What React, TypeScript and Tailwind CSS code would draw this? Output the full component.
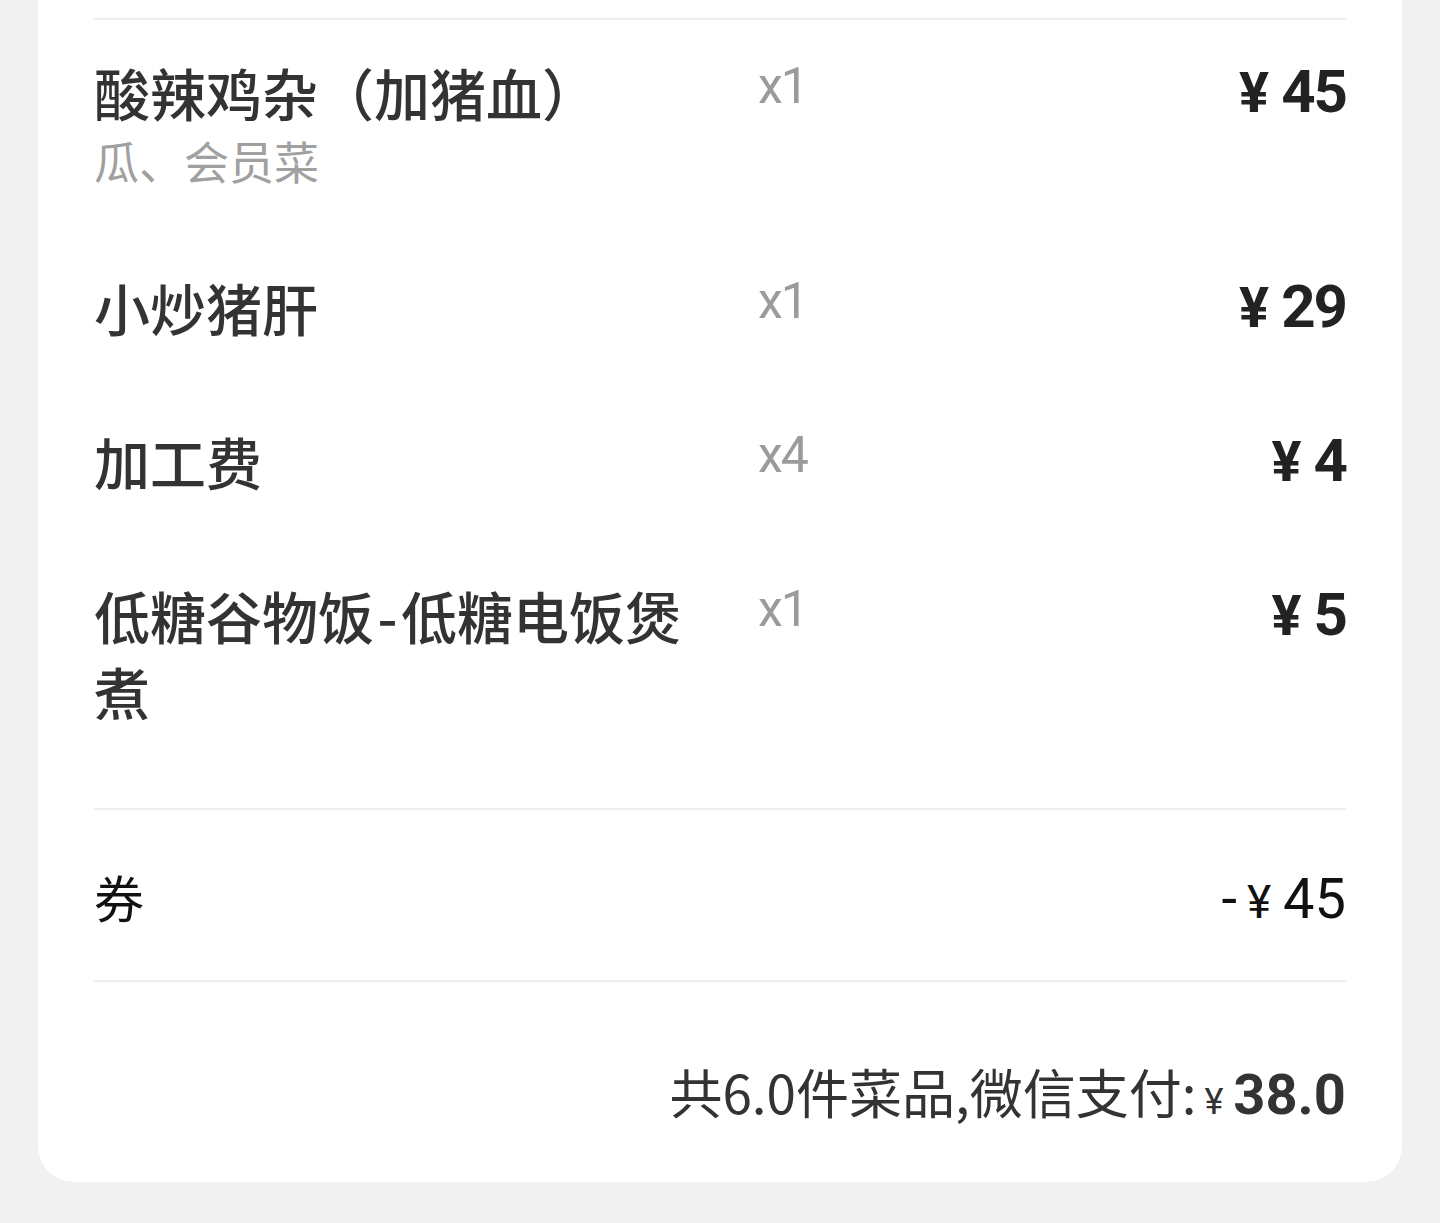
import React from "react"

const cjk = "font-['Noto_Sans_CJK_SC','Noto_Sans',sans-serif]"
const num = "font-['Roboto','Noto_Sans_CJK_SC',sans-serif]"

type Item = { name: string; sub?: string; qty: string; price: string }

const items: Item[] = [
  { name: "酸辣鸡杂（加猪血）", sub: "瓜、会员菜", qty: "x1", price: "45" },
  { name: "小炒猪肝", qty: "x1", price: "29" },
  { name: "加工费", qty: "x4", price: "4" },
  { name: "低糖谷物饭\u200a-\u200a低糖电饭煲煮", qty: "x1", price: "5" },
]

function ItemRow({ item }: { item: Item }) {
  return (
    <div className="flex items-start">
      <div className="w-[610px] shrink-0">
        <div className={`${cjk} text-[56px] font-medium leading-[76px] text-[#333333]`}>{item.name}</div>
        {item.sub && (
          <div className={`${cjk} text-[45px] leading-[62px] text-[#a0a0a0]`}>{item.sub}</div>
        )}
      </div>
      <div className={`${num} ml-[54px] text-[50px] leading-[64px] tracking-[-2px] text-[#9b9b9b]`}>
        {item.qty}
      </div>
      <div className={`${num} flex-1 text-right text-[60px] font-bold leading-[76px] tracking-[-2px] text-[#222222]`}>
        <span className="mr-[14px] text-[56px]">¥</span>
        {item.price}
      </div>
    </div>
  )
}

export default function App() {
  return (
    <div className="min-h-[1223px] w-[1440px] bg-[#f1f1f1] px-[38px]">
      <div className="rounded-b-[36px] bg-white px-[56px] pt-[18px] pb-[53px]">
        <div className="h-[2px] bg-[#eeeeee]" />

        <div className="flex flex-col gap-[77px] pt-[34px] pb-[79px]">
          {items.map((item) => (
            <ItemRow key={item.name} item={item} />
          ))}
        </div>

        <div className="h-[2px] bg-[#eeeeee]" />

        <div className="pt-[48px] pb-[46px]">
          <div className="flex h-[76px] items-baseline justify-between">
            <div className={`${cjk} text-[50px] leading-[76px] text-[#111111]`}>券</div>
            <div className={`${num} flex items-baseline text-[56px] leading-[76px] text-[#111111]`}>
              <span>-</span>
              <span className="ml-[10px] text-[46px]">¥</span>
              <span className="ml-[12px]">45</span>
            </div>
          </div>
        </div>

        <div className="h-[2px] bg-[#eeeeee]" />

        <div className="pt-[71px]">
          <div className="flex h-[76px] items-baseline justify-end leading-[76px] text-[#333333]">
            <span className={`${cjk} text-[53px]`}>共6.0件菜品,微信支付:</span>
            <span className={`${num} ml-[8px] text-[36px]`}>¥</span>
            <span className={`${num} ml-[10px] text-[56px] font-bold`}>38.0</span>
          </div>
        </div>
      </div>
    </div>
  )
}
